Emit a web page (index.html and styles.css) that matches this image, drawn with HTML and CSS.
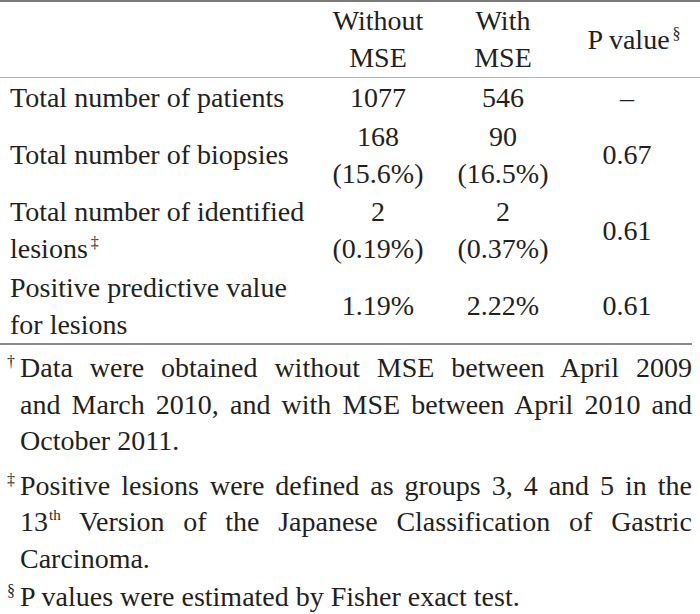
FILE: index.html
```html
<!DOCTYPE html>
<html>
<head>
<meta charset="utf-8">
<link rel="stylesheet" href="styles.css">
</head>
<body class="doc">
<div class="page">
  <table class="tbl">
    <colgroup>
      <col class="c-label">
      <col class="c-without">
      <col class="c-with">
      <col class="c-p">
    </colgroup>
    <thead>
      <tr>
        <th class="lbl"></th>
        <th class="cell">Without<br>MSE</th>
        <th class="cell">With<br>MSE</th>
        <th class="cell pcol">P value<sup class="mk">§</sup></th>
      </tr>
    </thead>
    <tbody>
      <tr>
        <td class="lbl">Total number of patients</td>
        <td class="cell">1077</td>
        <td class="cell">546</td>
        <td class="cell pcol">–</td>
      </tr>
      <tr>
        <td class="lbl">Total number of biopsies</td>
        <td class="cell">168<br>(15.6%)</td>
        <td class="cell">90<br>(16.5%)</td>
        <td class="cell pcol">0.67</td>
      </tr>
      <tr>
        <td class="lbl">Total number of identified<br>lesions<sup class="mk">‡</sup></td>
        <td class="cell">2<br>(0.19%)</td>
        <td class="cell">2<br>(0.37%)</td>
        <td class="cell pcol">0.61</td>
      </tr>
      <tr>
        <td class="lbl">Positive predictive value<br>for lesions</td>
        <td class="cell">1.19%</td>
        <td class="cell">2.22%</td>
        <td class="cell pcol">0.61</td>
      </tr>
    </tbody>
  </table>
  <div class="rule"></div>
  <div class="notes">
    <div class="note n1">
      <span class="nmark">†</span>
      <div class="ntext">
        <span class="jl">Data were obtained without MSE between April 2009</span>
        <span class="jl">and March 2010, and with MSE between April 2010 and</span>
        <span class="ll">October 2011.</span>
      </div>
    </div>
    <div class="note n2">
      <span class="nmark">‡</span>
      <div class="ntext">
        <span class="jl">Positive lesions were defined as groups 3, 4 and 5 in the</span>
        <span class="jl">13<sup class="th">th</sup> Version of the Japanese Classification of Gastric</span>
        <span class="ll">Carcinoma.</span>
      </div>
    </div>
    <div class="note n3">
      <span class="nmark">§</span>
      <div class="ntext">
        <span class="ll">P values were estimated by Fisher exact test.</span>
      </div>
    </div>
  </div>
</div>
</body>
</html>
```

FILE: styles.css
```css
.doc {
  margin: 0;
  padding: 0;
  background: #ffffff;
  font-family: "Liberation Serif", serif;
}

.page {
  width: 700px;
  color: #231f20;
  font-size: 28px;
  line-height: 37px;
  font-family: "Liberation Serif", serif;
}

.tbl {
  width: 700px;
  border-collapse: collapse;
  table-layout: fixed;
  border-top: 2px solid #7a7a7a;
  font-size: 28px;
  line-height: 37px;
  color: #231f20;
  font-family: "Liberation Serif", serif;
}

.c-label { width: 318px; }
.c-without { width: 120px; }
.c-with { width: 130px; }
.c-p { width: 132px; }

.cell,
.lbl {
  font-family: "Liberation Serif", serif;
  font-weight: normal;
  text-align: center;
  vertical-align: middle;
  padding: 1px 0 0.5px 0;
}

.tbl thead .cell,
.tbl thead .lbl {
  border-bottom: 1px solid #b5b5b5;
  padding: 0 0 1px 0;
}

.tbl .lbl {
  text-align: left;
  padding-left: 10px;
}

.tbl .pcol {
  padding-right: 14px;
}

.mk {
  font-family: "Liberation Serif", serif;
  font-size: 16px;
  line-height: 0;
  vertical-align: 10px;
  margin-left: 3px;
}

.rule {
  width: 692px;
  height: 0;
  border-top: 2px solid #8a8a8a;
  margin-top: 0;
}

.notes {
  width: 692px;
  padding-top: 5px;
  line-height: 36.5px;
  font-family: "Liberation Serif", serif;
}

.note {
  display: flex;
}

.n2 { margin-top: 8px; }
.n3 { margin-top: 2px; }

.nmark {
  font-family: "Liberation Serif", serif;
  width: 20px;
  flex: none;
  font-size: 16px;
  line-height: 20px;
  padding-left: 7px;
  box-sizing: border-box;
  padding-top: 2px;
}

.ntext {
  flex: 1;
}

.jl {
  font-family: "Liberation Serif", serif;
  display: block;
  text-align: justify;
  text-align-last: justify;
}

.ll {
  font-family: "Liberation Serif", serif;
  display: block;
  text-align: left;
}

.th {
  font-family: "Liberation Serif", serif;
  font-size: 15px;
  line-height: 0;
  vertical-align: 11px;
  margin-left: 1px;
}
```
